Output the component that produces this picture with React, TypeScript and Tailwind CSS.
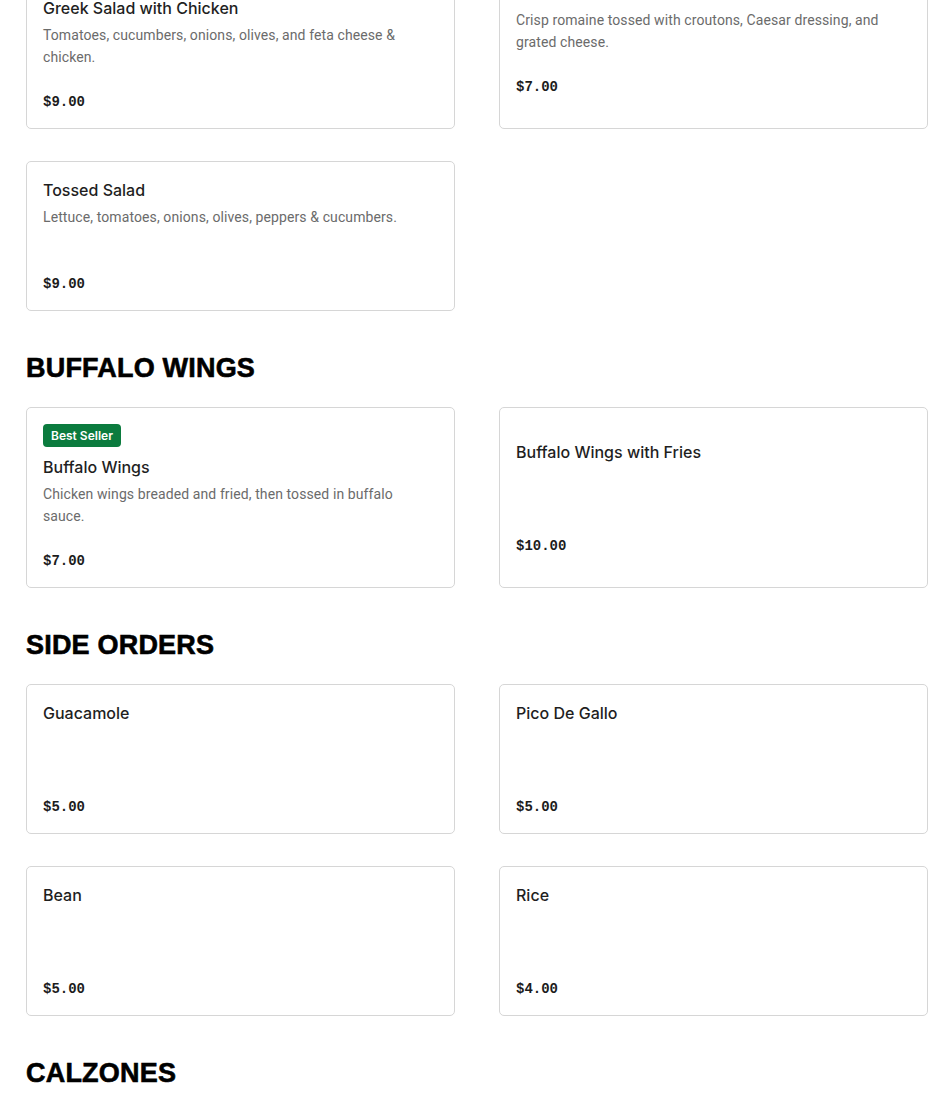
import React from 'react';

type Item = {
    name: string;
    desc?: string;
    price: string;
    badge?: string;
    shiftUp?: boolean;
};

type Section = {
    title?: string;
    items: Item[];
};

const sections: Section[] = [
    {
        items: [
            {
                name: 'Greek Salad with Chicken',
                desc: 'Tomatoes, cucumbers, onions, olives, and feta cheese & chicken.',
                price: '$9.00',
            },
            {
                name: 'Caesar Salad',
                desc: 'Crisp romaine tossed with croutons, Caesar dressing, and grated cheese.',
                price: '$7.00',
                shiftUp: true,
            },
            {
                name: 'Tossed Salad',
                desc: 'Lettuce, tomatoes, onions, olives, peppers & cucumbers.',
                price: '$9.00',
            },
        ],
    },
    {
        title: 'BUFFALO WINGS',
        items: [
            {
                name: 'Buffalo Wings',
                desc: 'Chicken wings breaded and fried, then tossed in buffalo sauce.',
                price: '$7.00',
                badge: 'Best Seller',
            },
            { name: 'Buffalo Wings with Fries', price: '$10.00' },
        ],
    },
    {
        title: 'SIDE ORDERS',
        items: [
            { name: 'Guacamole', price: '$5.00' },
            { name: 'Pico De Gallo', price: '$5.00' },
            { name: 'Bean', price: '$5.00' },
            { name: 'Rice', price: '$4.00' },
        ],
    },
    {
        title: 'CALZONES',
        items: [
            { name: 'Cheese Calzone', desc: 'Ricotta and mozzarella cheese.', price: '$11.00' },
            { name: 'Meat Calzone', desc: 'Pepperoni, sausage and ham with ricotta.', price: '$13.00' },
        ],
    },
];

const MenuCard = ({ item }: { item: Item }) => {
    return (
        <div
            className={`flex flex-col justify-center rounded-[5px] border border-[#d6d6d6] bg-white px-4 ${
                item.shiftUp ? 'pt-[1px] pb-[31px]' : 'pt-4 pb-4'
            }`}
        >
            {item.badge && (
                <div className="mb-2 self-start rounded-[4px] bg-[#0b7b3e] px-2 text-[12px] font-semibold leading-[23px] text-white">
                    {item.badge}
                </div>
            )}
            <h3 className="text-[16px] font-medium leading-6 text-[#1f1f1f]">{item.name}</h3>
            <p className="mt-1 min-h-[44px] pr-4 font-['Roboto',sans-serif] text-[14px] leading-[22px] tracking-[0.1px] text-[#6b6b6b]">
                {item.desc}
            </p>
            <p className="mt-6 font-['Liberation_Mono',monospace] text-[14px] font-bold leading-5 text-[#1c1c1c]">
                {item.price}
            </p>
        </div>
    );
};

export default function App() {
    return (
        <div className="h-[1095px] overflow-hidden bg-white font-['Inter',sans-serif]">
            <div className="-mt-[21px] w-[928px] pl-[26px]">
                {sections.map((section, i) => (
                    <section key={i}>
                        {section.title && (
                            <h2 className="mt-[39px] mb-[21px] font-['Liberation_Sans',Arial,sans-serif] text-[27px] font-bold leading-9 tracking-[0.2px] text-black [-webkit-text-stroke:0.6px_black]">
                                {section.title}
                            </h2>
                        )}
                        <div className="grid grid-cols-2 gap-x-[44px] gap-y-8">
                            {section.items.map((item) => (
                                <MenuCard key={item.name} item={item} />
                            ))}
                        </div>
                    </section>
                ))}
            </div>
        </div>
    );
}
